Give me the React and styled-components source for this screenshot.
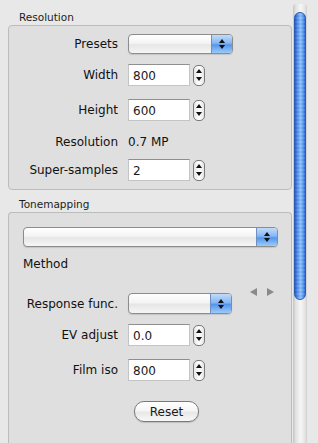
import React from 'react';
import styled, { createGlobalStyle } from 'styled-components';

const GlobalStyle = createGlobalStyle`
  html, body {
    margin: 0;
    padding: 0;
    background: #e8e8e8;
    font-family: "DejaVu Sans", "Liberation Sans", sans-serif;
    color: #1a1a1a;
  }
`;

const App = () => {
  return (
    <Page>
      <GlobalStyle />
      <Main>
        <Title top={10}>Resolution</Title>
        <Box>
          <Row top={0} height={20}>
            <Label>Presets</Label>
            <Popup width={105} />
          </Row>
          <Row top={10} height={22}>
            <Label>Width</Label>
            <NumberField value="800" />
          </Row>
          <Row top={13} height={22}>
            <Label>Height</Label>
            <NumberField value="600" />
          </Row>
          <Row top={10} height={22}>
            <Label>Resolution</Label>
            <Value>0.7 MP</Value>
          </Row>
          <Row top={6} height={22}>
            <Label>Super-samples</Label>
            <NumberField value="2" />
          </Row>
        </Box>

        <Title top={7}>Tonemapping</Title>
        <Box grow>
          <Popup width={255} />
          <MethodLabel>Method</MethodLabel>
          <Nav>
            <Arrow dir="left" />
            <Arrow dir="right" />
          </Nav>
          <Row top={0} height={21}>
            <Label>Response func.</Label>
            <Popup width={104} height={21} />
          </Row>
          <Row top={10} height={22}>
            <Label>EV adjust</Label>
            <NumberField value="0.0" />
          </Row>
          <Row top={13} height={22}>
            <Label>Film iso</Label>
            <NumberField value="800" />
          </Row>
          <ButtonRow>
            <Button>Reset</Button>
          </ButtonRow>
        </Box>
      </Main>
      <Scrollbar>
        <Thumb />
      </Scrollbar>
    </Page>
  );
};

const Popup = ({ width, height = 20 }) => (
  <PopupBox style={{ width, height }}>
    <PopupCap>
      <Tri up />
      <Tri />
    </PopupCap>
  </PopupBox>
);

const NumberField = ({ value }) => (
  <Field>
    <Input>{value}</Input>
    <Stepper>
      <Tri up small />
      <Tri small />
    </Stepper>
  </Field>
);

const Page = styled.div`
  display: flex;
  width: 318px;
  height: 443px;
  overflow: hidden;
  background: #e8e8e8;
`;

const Main = styled.div`
  width: 284px;
  padding-left: 8px;
  padding-right: 1px;
  display: flex;
  flex-direction: column;
`;

const Title = styled.div`
  padding-top: ${p => p.top}px;
  padding-left: 11px;
  height: 14px;
  line-height: 14px;
  margin-bottom: 1px;
  font-size: 10.5px;
  color: #1c1c1c;
`;

const Box = styled.div`
  position: relative;
  border: 1px solid #bcbcbc;
  border-radius: 4px;
  background: #dfdfdf;
  padding: 8px 14px 8px 14px;
  ${p => p.grow && `
    flex: 1;
    padding-top: 14px;
    border-bottom: none;
    border-radius: 4px 4px 0 0;
  `}
`;

const Row = styled.div`
  display: grid;
  grid-template-columns: 95px auto;
  column-gap: 10px;
  align-items: center;
  margin-top: ${p => p.top}px;
  height: ${p => p.height}px;
`;

const Label = styled.div`
  text-align: right;
  font-size: 12px;
  white-space: nowrap;
  color: #111;
`;

const Value = styled.div`
  font-size: 12px;
  color: #111;
`;

const MethodLabel = styled.div`
  margin-top: 10px;
  height: 14px;
  line-height: 14px;
  font-size: 12px;
  color: #111;
`;

const Nav = styled.div`
  display: flex;
  justify-content: flex-end;
  gap: 10px;
  height: 12px;
  margin-top: 15px;
  margin-bottom: -5px;
  padding-right: 3px;
  align-items: center;
`;

const Arrow = styled.div`
  width: 0;
  height: 0;
  border-top: 4px solid transparent;
  border-bottom: 4px solid transparent;
  ${p => p.dir === 'left'
    ? 'border-right: 7px solid #8a8a8a;'
    : 'border-left: 7px solid #8a8a8a;'}
`;

const PopupBox = styled.div`
  box-sizing: border-box;
  display: flex;
  justify-content: flex-end;
  border: 1px solid #8c8c8c;
  border-radius: 4px;
  background: linear-gradient(#ffffff 0%, #f4f4f4 45%, #e6e6e6 55%, #f6f6f6 100%);
  box-shadow: 0 1px 1px rgba(0, 0, 0, 0.12);
  overflow: hidden;
`;

const PopupCap = styled.div`
  width: 20px;
  display: flex;
  flex-direction: column;
  align-items: center;
  justify-content: center;
  gap: 2px;
  border-left: 1px solid #6d8fc4;
  background: linear-gradient(#c2dbfa 0%, #86b7f2 45%, #5596ea 55%, #9ccbfa 100%);
`;

const Tri = styled.div`
  width: 0;
  height: 0;
  border-left: ${p => (p.small ? 3 : 3.5)}px solid transparent;
  border-right: ${p => (p.small ? 3 : 3.5)}px solid transparent;
  ${p => p.up
    ? 'border-bottom: 4px solid #111;'
    : 'border-top: 4px solid #111;'}
`;

const Field = styled.div`
  display: flex;
  align-items: center;
  gap: 3px;
`;

const Input = styled.div`
  box-sizing: border-box;
  width: 62px;
  height: 22px;
  padding: 3px 0 0 4px;
  font-size: 12px;
  line-height: 16px;
  background: #fff;
  border: 1px solid #c4c4c4;
  border-top-color: #8f8f8f;
`;

const Stepper = styled.div`
  box-sizing: border-box;
  width: 12px;
  height: 21px;
  display: flex;
  flex-direction: column;
  align-items: center;
  justify-content: center;
  gap: 4px;
  border: 1px solid #7a7a7a;
  border-radius: 5px;
  background: linear-gradient(90deg, #e6e6e6, #ffffff 50%, #e6e6e6);
`;

const ButtonRow = styled.div`
  display: flex;
  padding-left: 111px;
  margin-top: 20px;
`;

const Button = styled.div`
  box-sizing: border-box;
  width: 65px;
  height: 21px;
  display: flex;
  align-items: center;
  justify-content: center;
  font-size: 12px;
  border: 1px solid #7a7a7a;
  border-radius: 10px;
  background: linear-gradient(#ffffff 0%, #f6f6f6 45%, #e8e8e8 55%, #f8f8f8 100%);
  box-shadow: 0 1px 1px rgba(0, 0, 0, 0.15);
`;

const Scrollbar = styled.div`
  position: relative;
  box-sizing: border-box;
  width: 14px;
  margin-top: 4px;
  height: 439px;
  border-radius: 3px 3px 0 0;
  background: linear-gradient(90deg, #c4c4c4 0%, #e2e2e2 20%, #f6f6f6 55%, #e4e4e4 85%, #cfcfcf 100%);
`;

const Thumb = styled.div`
  position: absolute;
  left: 1px;
  top: 8px;
  width: 12px;
  height: 288px;
  border-radius: 6px;
  box-sizing: border-box;
  border: 1px solid #2f58b0;
  background:
    repeating-linear-gradient(0deg, rgba(255, 255, 255, 0.08) 0 2px, rgba(0, 0, 0, 0.03) 2px 4px),
    linear-gradient(90deg, #2258d0 0%, #4f90ee 25%, #8cc0fa 55%, #5c9ef2 80%, #2a66d8 100%);
`;

export default App;
